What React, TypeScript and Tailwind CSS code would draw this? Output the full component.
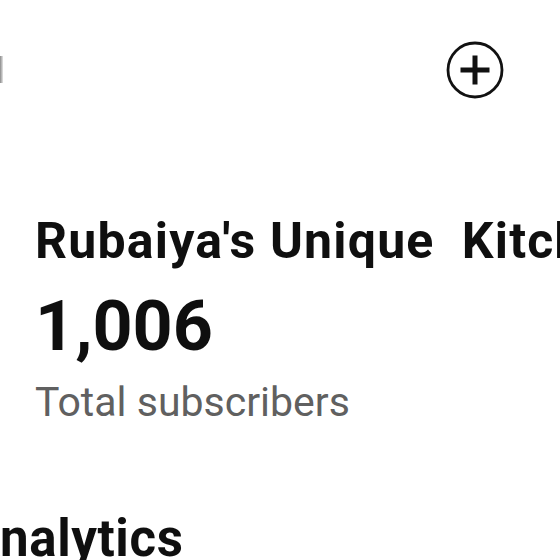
export default function App() {
  return (
    <div className="w-[560px] h-[560px] overflow-hidden bg-white text-[#0f0f0f]" style={{ fontFamily: "Roboto, 'Noto Sans', sans-serif" }}>
      <div className="flex items-center justify-between pt-[41px] h-[98px]">
        <div className="w-[3px] h-[27px] bg-gradient-to-r from-[#8a8a8a] to-[#e6e6e6]" />
        <svg width="58" height="58" viewBox="0 0 58 58" className="mr-[56px]">
          <circle cx="29" cy="29" r="27" fill="none" stroke="#111" strokeWidth="2.8" />
          <path d="M14.5 29h29M29 14.5v29" stroke="#111" strokeWidth="5" strokeLinecap="butt" />
        </svg>
      </div>
      <div className="pl-[35px] mt-[113px] whitespace-nowrap">
        <div className="text-[50px] leading-[60px] font-bold tracking-[1.2px]">Rubaiya's Unique&nbsp; Kitchen</div>
        <div className="text-[70px] leading-[80px] font-bold mt-[15px]">1,006</div>
        <div className="text-[41px] leading-[50px] text-[#606060] mt-[10.5px]">Total subscribers</div>
      </div>
      <div className="text-[51px] leading-[60px] font-bold mt-[82.5px] ml-[-34px] tracking-[0.6px] whitespace-nowrap">Analytics</div>
    </div>
  );
}
